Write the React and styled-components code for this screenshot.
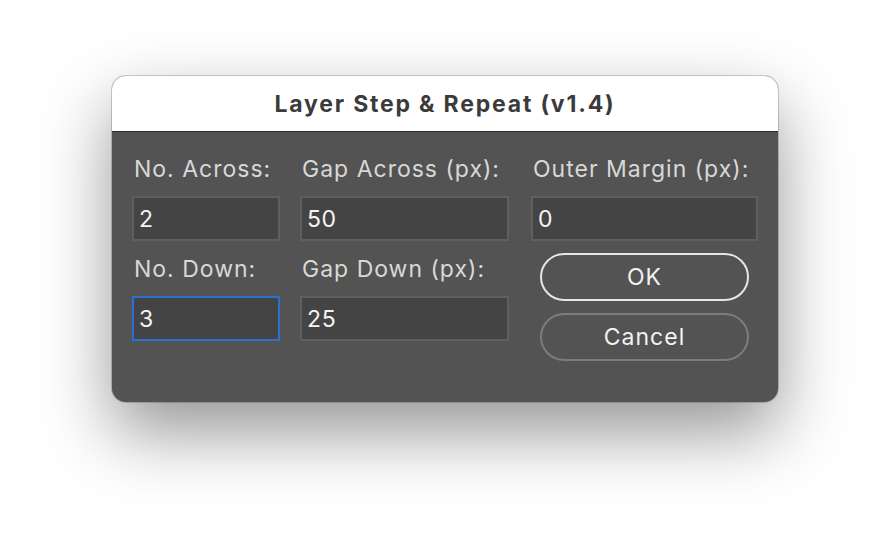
import React, { useState } from 'react';
import styled, { createGlobalStyle } from 'styled-components';

const GlobalStyle = createGlobalStyle`
  html, body {
    margin: 0;
    padding: 0;
    background: #ffffff;
  }
  body {
    font-family: Inter, "Liberation Sans", Arial, sans-serif;
  }
`;

const Page = styled.div`
  width: 890px;
  height: 550px;
  padding: 76px 0 0 112px;
  box-sizing: border-box;
  overflow: hidden;
`;

const Dialog = styled.div`
  width: 666px;
  height: 326px;
  border-radius: 14px;
  overflow: hidden;
  background: #535353;
  box-shadow: 0 0 0 1px rgba(0, 0, 0, 0.18), 0 30px 70px rgba(0, 0, 0, 0.42);
  display: flex;
  flex-direction: column;
`;

const TitleBar = styled.div`
  height: 55px;
  flex: none;
  background: #ffffff;
  border-bottom: 1px solid #2e2e2e;
  display: flex;
  align-items: center;
  justify-content: center;
  font-size: 23px;
  font-weight: 700;
  color: #3b3b3b;
  letter-spacing: 1.8px;
`;

const Body = styled.div`
  display: flex;
  gap: 20px;
  padding: 24px 0 0 20px;
`;

const Column = styled.div`
  display: flex;
  flex-direction: column;
  width: ${p => p.$width}px;
  margin-left: ${p => p.$offset || 0}px;
`;

const Label = styled.label`
  font-size: 23px;
  line-height: 27px;
  height: 27px;
  padding-left: 2px;
  color: #d8d8d8;
  letter-spacing: 1px;
  white-space: nowrap;
  margin-bottom: 13px;
`;

const Field = styled.input`
  box-sizing: border-box;
  width: 100%;
  height: 45px;
  margin: 0 0 15px;
  padding: 0 5px;
  background: #444444;
  border: 2px solid ${p => (p.$focused ? '#2d6fd2' : '#5f5f5f')};
  border-radius: 0;
  outline: none;
  color: #f4f4f4;
  font-family: inherit;
  font-size: 23px;
  letter-spacing: 0.6px;
`;

const ButtonStack = styled.div`
  display: flex;
  flex-direction: column;
  align-items: center;
  gap: 12px;
  margin-top: -3px;
`;

const PillButton = styled.button`
  box-sizing: border-box;
  width: 209px;
  height: 48px;
  border-radius: 24px;
  background: transparent;
  border: 2px solid ${p => (p.$primary ? '#e6e6e6' : '#7c7c7c')};
  color: #f2f2f2;
  font-family: inherit;
  font-size: 23px;
  letter-spacing: 1px;
  cursor: pointer;
`;

export default function App() {
  const [values, setValues] = useState({
    across: '2',
    gapAcross: '50',
    margin: '0',
    down: '3',
    gapDown: '25',
  });

  const set = key => e => setValues({ ...values, [key]: e.target.value });

  return (
    <>
      <GlobalStyle />
      <Page>
        <Dialog>
          <TitleBar>Layer Step &amp; Repeat (v1.4)</TitleBar>
          <Body>
            <Column $width={148}>
              <Label>No. Across:</Label>
              <Field value={values.across} onChange={set('across')} />
              <Label>No. Down:</Label>
              <Field $focused value={values.down} onChange={set('down')} />
            </Column>
            <Column $width={209}>
              <Label>Gap Across (px):</Label>
              <Field value={values.gapAcross} onChange={set('gapAcross')} />
              <Label>Gap Down (px):</Label>
              <Field value={values.gapDown} onChange={set('gapDown')} />
            </Column>
            <Column $width={227} $offset={2}>
              <Label>Outer Margin (px):</Label>
              <Field value={values.margin} onChange={set('margin')} />
              <ButtonStack>
                <PillButton $primary>OK</PillButton>
                <PillButton>Cancel</PillButton>
              </ButtonStack>
            </Column>
          </Body>
        </Dialog>
      </Page>
    </>
  );
}
